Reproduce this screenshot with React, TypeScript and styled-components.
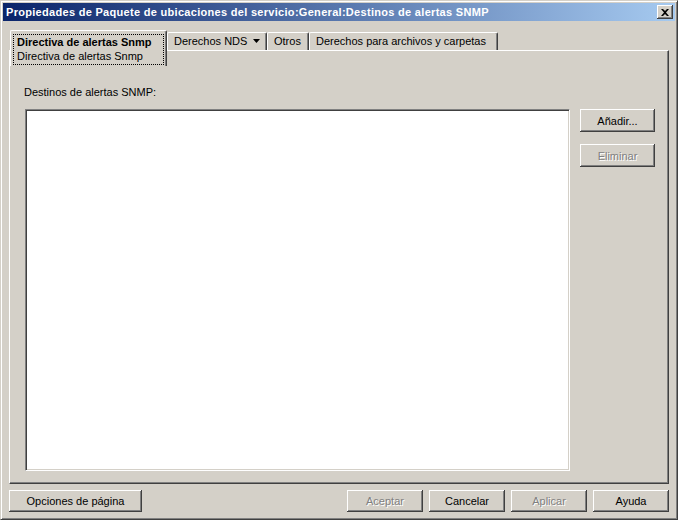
import React from "react"
import styled, { createGlobalStyle, css } from "styled-components"

const GlobalStyle = createGlobalStyle`
  html, body {
    margin: 0;
    padding: 0;
    background: #d4d0c8;
  }
  body {
    font-family: "Liberation Sans", Arial, sans-serif;
    font-size: 11px;
    color: #000;
  }
`

const Window = styled.div`
  box-sizing: border-box;
  width: 678px;
  height: 520px;
  display: flex;
  flex-direction: column;
  padding: 2px;
  background: #d4d0c8;
  border: 1px solid;
  border-color: #d4d0c8 #404040 #404040 #d4d0c8;
  box-shadow: inset 1px 1px #fff, inset -1px -1px #808080;
`

const TitleBar = styled.div`
  height: 18px;
  display: flex;
  align-items: center;
  justify-content: space-between;
  padding: 0 2px 0 3px;
  background: linear-gradient(to right, #0a246a, #a6caf0);
`

const TitleText = styled.span`
  color: #fff;
  font-weight: bold;
  font-size: 11px;
  letter-spacing: 0.3px;
  white-space: nowrap;
`

const CloseButton = styled.div`
  box-sizing: border-box;
  width: 16px;
  height: 14px;
  display: flex;
  align-items: center;
  justify-content: center;
  background: #d4d0c8;
  box-shadow: inset -1px -1px #404040, inset 1px 1px #fff, inset -2px -2px #808080;
`

const Body = styled.div`
  flex: 1;
  display: flex;
  flex-direction: column;
  padding: 9px 6px 5px 6px;
  min-height: 0;
`

const TabRow = styled.div`
  height: 20px;
  display: flex;
  align-items: flex-end;
  padding-left: 1px;
  position: relative;
  z-index: 2;
`

const Tab = styled.div<{ $w: number; $active?: boolean }>`
  box-sizing: border-box;
  width: ${(p) => p.$w}px;
  background: #d4d0c8;
  border-top: 1px solid #fff;
  border-left: 1px solid #fff;
  border-right: 1px solid #404040;
  border-radius: 2px 2px 0 0;
  box-shadow: inset -1px 0 #808080;
  white-space: nowrap;
  ${(p) =>
    p.$active
      ? css`
          height: 36px;
          margin-bottom: -16px;
          padding: 3px 2px 1px 2px;
        `
      : css`
          height: 18px;
          display: flex;
          align-items: center;
          padding: 0 0 1px 6px;
        `}
`

const FocusBox = styled.div`
  box-sizing: border-box;
  height: 100%;
  border: 1px dotted #000;
  padding: 0 3px 0 3px;
  display: flex;
  flex-direction: column;
  justify-content: space-around;
`

const TabTitle = styled.span<{ $bold?: boolean }>`
  font-weight: ${(p) => (p.$bold ? "bold" : "normal")};
  line-height: 13px;
`

const TabArrow = styled.svg`
  margin-left: 6px;
`

const Panel = styled.div`
  flex: 1;
  display: flex;
  flex-direction: column;
  padding: 35px 13px 12px 14px;
  border-top: 1px solid #fff;
  border-left: 1px solid #fff;
  border-right: 1px solid #404040;
  border-bottom: 1px solid #404040;
  box-shadow: inset -1px -1px #808080;
  min-height: 0;
`

const FieldLabel = styled.div`
  line-height: 13px;
  margin-bottom: 10px;
`

const ListRow = styled.div`
  flex: 1;
  display: flex;
  gap: 10px;
  padding-left: 1px;
  min-height: 0;
`

const ListBox = styled.div`
  box-sizing: border-box;
  width: 545px;
  background: #fff;
  border: 1px solid;
  border-color: #808080 #fff #fff #808080;
  box-shadow: inset 1px 1px #404040, inset -1px -1px #d4d0c8;
`

const SideButtons = styled.div`
  display: flex;
  flex-direction: column;
  gap: 12px;
`

const Button = styled.button<{ $w?: number; $h?: number }>`
  box-sizing: border-box;
  width: ${(p) => p.$w ?? 75}px;
  height: ${(p) => p.$h ?? 23}px;
  padding: 0;
  border: none;
  background: #d4d0c8;
  font-family: "Liberation Sans", Arial, sans-serif;
  font-size: 11px;
  color: #000;
  box-shadow: inset -1px -1px #404040, inset 1px 1px #fff, inset -2px -2px #808080;

  &:disabled {
    color: #808080;
    text-shadow: 1px 1px #fff;
  }
`

const Footer = styled.div`
  display: flex;
  gap: 6px;
  margin-top: 6px;
`

const Spacer = styled.div`
  flex: 1;
`

export default function App() {
  return (
    <>
      <GlobalStyle />
      <Window>
        <TitleBar>
          <TitleText>Propiedades de Paquete de ubicaciones del servicio:General:Destinos de alertas SNMP</TitleText>
          <CloseButton>
            <svg width="8" height="7" viewBox="0 0 8 7">
              <path d="M0 0h2l2 2 2-2h2L5 3.5 8 7H6L4 5 2 7H0l3-3.5z" fill="#000" />
            </svg>
          </CloseButton>
        </TitleBar>

        <Body>
          <TabRow>
            <Tab $w={157} $active>
              <FocusBox>
                <TabTitle $bold>Directiva de alertas Snmp</TabTitle>
                <TabTitle>Directiva de alertas Snmp</TabTitle>
              </FocusBox>
            </Tab>
            <Tab $w={100}>
              <TabTitle>Derechos NDS</TabTitle>
              <TabArrow width="7" height="4" viewBox="0 0 7 4">
                <path d="M0 0h7L3.5 4z" fill="#000" />
              </TabArrow>
            </Tab>
            <Tab $w={42}>
              <TabTitle>Otros</TabTitle>
            </Tab>
            <Tab $w={189}>
              <TabTitle>Derechos para archivos y carpetas</TabTitle>
            </Tab>
          </TabRow>

          <Panel>
            <FieldLabel>Destinos de alertas SNMP:</FieldLabel>
            <ListRow>
              <ListBox />
              <SideButtons>
                <Button>Añadir...</Button>
                <Button disabled>Eliminar</Button>
              </SideButtons>
            </ListRow>
          </Panel>

          <Footer>
            <Button $w={133} $h={22}>Opciones de página</Button>
            <Spacer />
            <Button $w={76} $h={22} disabled>Aceptar</Button>
            <Button $w={76} $h={22}>Cancelar</Button>
            <Button $w={76} $h={22} disabled>Aplicar</Button>
            <Button $w={76} $h={22}>Ayuda</Button>
          </Footer>
        </Body>
      </Window>
    </>
  )
}
